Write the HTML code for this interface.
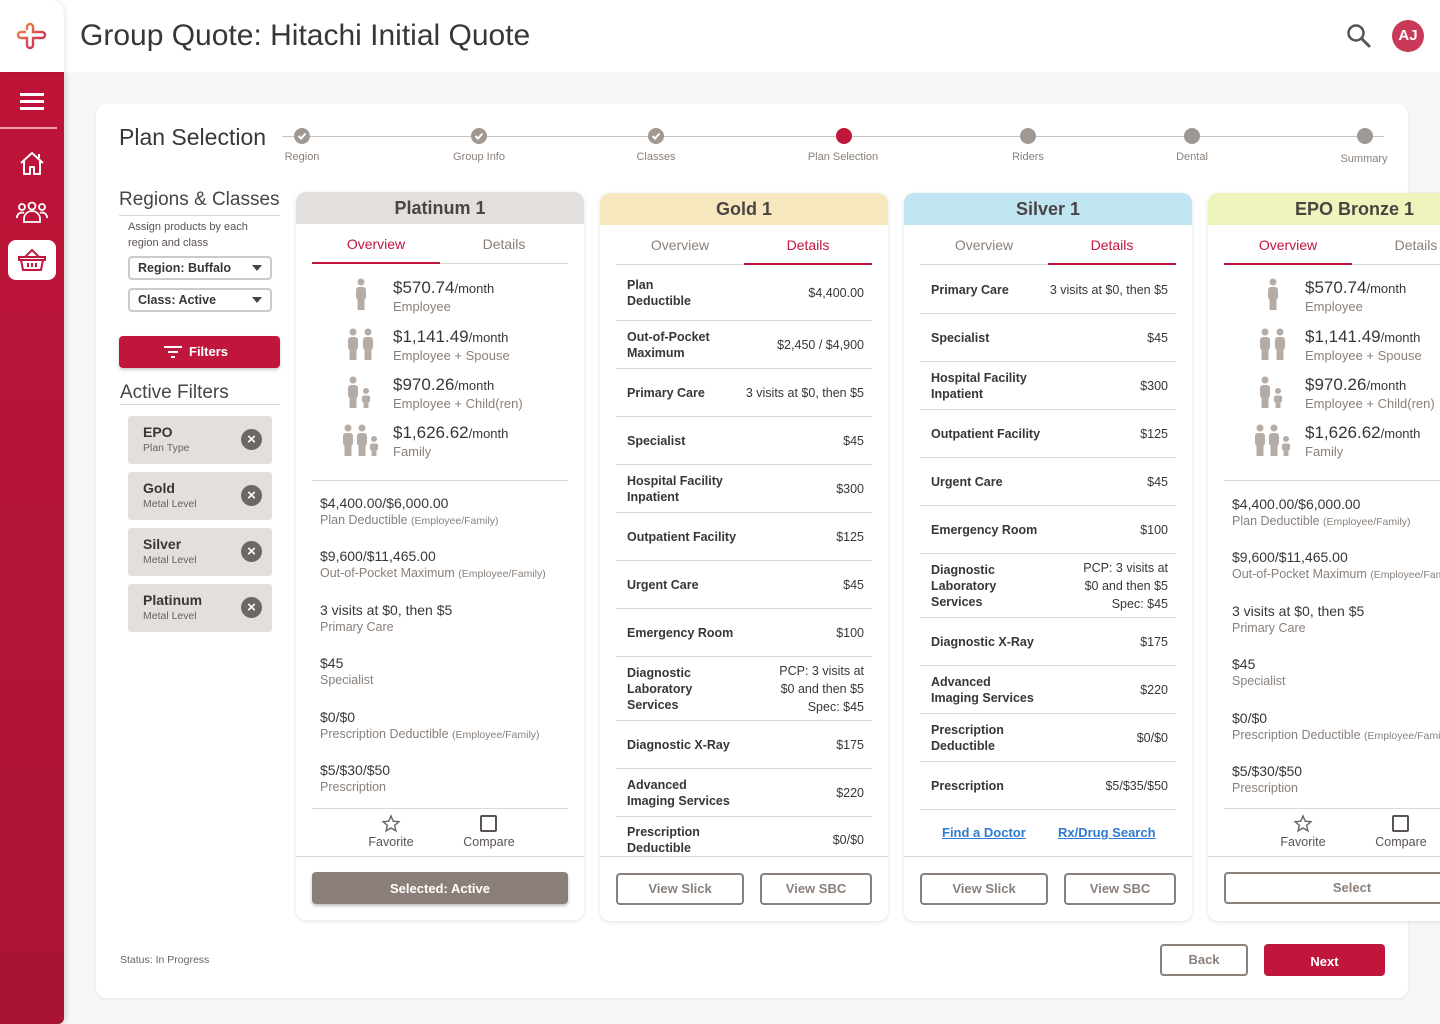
<!DOCTYPE html>
<html><head><meta charset="utf-8"><style>
*{box-sizing:border-box;margin:0;padding:0}
body{width:1440px;height:1024px;overflow:hidden;background:#f7f7f7;font-family:"Liberation Sans",sans-serif;color:#3a3634;position:relative}
.abs{position:absolute}
.side{position:absolute;left:0;top:72px;width:64px;height:952px;background:linear-gradient(#be1438,#a91434);border-bottom-right-radius:6px;box-shadow:2px 0 6px rgba(0,0,0,.15)}
.top{position:absolute;left:0;top:0;width:1440px;height:72px;background:#fff}
.logo{position:absolute;left:0;top:0;width:64px;height:72px;background:#fff;border-top-right-radius:14px;box-shadow:2px 0 6px rgba(0,0,0,.08)}
.panel{position:absolute;left:96px;top:104px;width:1312px;height:894px;background:#fff;border-radius:10px;box-shadow:0 1px 3px rgba(0,0,0,.08)}
.card{position:absolute;top:192px;width:288px;height:728px;background:#fff;border-radius:10px;box-shadow:0 1px 4px rgba(0,0,0,.12);overflow:hidden}
.ch{height:32px;text-align:center;font-size:18px;font-weight:bold;line-height:33px;color:#4a4542;border-radius:10px 10px 0 0}
.tabs{position:absolute;left:16px;top:36px;width:256px;height:36px;border-bottom:1px solid #d9d6d4;display:flex}
.tabs div{flex:1;text-align:center;font-size:14px;line-height:32px;color:#8a807a}
.tabs .on{color:#c0163c;border-bottom:2px solid #c0163c;margin-bottom:-1px}
.rows{position:absolute;left:16px;top:73px;width:256px}
.r{display:flex;align-items:center;justify-content:space-between;border-bottom:1px solid #dcdad8;padding:0 8px 0 11px;font-size:12.5px}
.r b{font-weight:bold;color:#3a3634;line-height:16px}
.r span{text-align:right;line-height:18px;color:#3a3634}
.pr{position:absolute;left:97px;font-size:17px;color:#3a3634}
.pr small{font-size:13px}
.pr i{display:block;font-style:normal;font-size:13px;color:#8a807a;margin-top:1px}
.ic{position:absolute}
.ov{position:absolute;left:24px;font-size:14px;color:#3a3634}
.ov i{display:block;font-style:normal;font-size:12.5px;color:#8a807a;margin-top:2px}
.ov i small{font-size:10.5px}
.foot{position:absolute;left:0;top:664px;width:288px;height:1px;background:#dcdad8}
.btn{position:absolute;height:32px;border:2px solid #8b8079;border-radius:4px;text-align:center;font-size:13px;line-height:28px;color:#8b8079;font-weight:bold;background:#fff}
.fil{position:absolute;left:128px;width:144px;height:48px;background:#e2dfdd;border-radius:3px}
.fil b{position:absolute;left:15px;top:8px;font-size:14px;color:#3a3634}
.fil i{position:absolute;left:15px;top:26px;font-size:10.5px;font-style:normal;color:#6b6460}
.fil .x{position:absolute;right:10px;top:13px;width:21px;height:21px;border-radius:50%;background:#6f6762;color:#fff;text-align:center;line-height:21px;font-size:15px;font-weight:bold}
.st{position:absolute;top:128px;width:16px;height:16px;border-radius:50%;background:#a09893}
.stl{position:absolute;font-size:11px;color:#8a807a;top:151px;transform:translateX(-50%);white-space:nowrap}
.sel{position:absolute;left:128px;width:144px;height:24px;border:2px solid #cfcac7;border-radius:4px;font-size:12.5px;font-weight:bold;color:#3a3634;padding-left:8px;line-height:20px}
.sel:after{content:"";position:absolute;right:8px;top:7px;border:5px solid transparent;border-top:6px solid #4a4542}
.fv{position:absolute;top:814px;text-align:center;font-size:12.5px;color:#5a5350;width:80px}
</style></head><body>
<div class="top"></div>
<div class="abs" style="left:80px;top:19px;font-size:30px;color:#3a3634">Group Quote: Hitachi Initial Quote</div>
<svg class="abs" style="left:1346px;top:23px" width="26" height="26" viewBox="0 0 26 26"><circle cx="10" cy="10" r="7.5" fill="none" stroke="#5a5350" stroke-width="2.5"/><path d="M15.5 15.5L23 23" stroke="#5a5350" stroke-width="3" stroke-linecap="round"/></svg>
<div class="abs" style="left:1392px;top:20px;width:32px;height:32px;border-radius:50%;background:#c93a5a;color:#fff;font-size:15px;font-weight:bold;text-align:center;line-height:32px">AJ</div>
<div class="side">
<div class="abs" style="left:20px;top:21px;width:24px;height:3px;background:#fff;box-shadow:0 7px 0 #fff,0 14px 0 #fff"></div>
<div class="abs" style="left:0;top:55px;width:57px;height:2px;background:rgba(255,255,255,.6)"></div>
<svg class="abs" style="left:18px;top:78px" width="28" height="26" viewBox="0 0 28 26"><path d="M3 13L14 3l11 10M6 11v13h6v-7h4v7h6V11M21 4v4" fill="none" stroke="#fff" stroke-width="2" stroke-linejoin="round"/></svg>
<svg class="abs" style="left:16px;top:128px" width="32" height="24" viewBox="0 0 32 24"><g fill="none" stroke="#fff" stroke-width="1.8"><circle cx="16" cy="6" r="3.5"/><circle cx="6" cy="7" r="3"/><circle cx="26" cy="7" r="3"/><path d="M8 22v-3a8 8 0 0 1 16 0v3zM1 18a5 5 0 0 1 7-5M31 18a5 5 0 0 0-7-5"/></g></svg>
<div class="abs" style="left:8px;top:168px;width:48px;height:40px;background:#fff;border-radius:8px"></div>
<svg class="abs" style="left:17px;top:175px" width="30" height="26" viewBox="0 0 30 26"><g fill="none" stroke="#c0163c" stroke-width="2"><path d="M8 10L15 3l7 7M2 10h26v3H2zM4 13l2 10h18l2-10M11 16v4M15 16v4M19 16v4"/></g></svg>
</div>
<div class="logo"><svg class="abs" style="left:16px;top:22px" width="32" height="28" viewBox="0 0 32 28"><defs><linearGradient id="g" x1="0" x2="1" y1="0" y2="1"><stop offset="0" stop-color="#f6923a"/><stop offset="1" stop-color="#c4166a"/></linearGradient></defs><path d="M11 7V5a3 3 0 0 1 6 0v5h9a3 3 0 0 1 0 6h-9v7a3 3 0 0 1-6 0v-7H5a3 3 0 0 1 0-6h4" fill="none" stroke="url(#g)" stroke-width="2.4" stroke-linecap="round"/></svg></div>

<svg width="0" height="0" style="position:absolute"><defs>
<g id="ad" fill="#b5aca6"><circle cx="6" cy="4" r="3.5"/><rect x="1" y="9" width="10" height="13" rx="3"/><rect x="2.5" y="19" width="7" height="13"/></g>
<g id="kd" fill="#b5aca6"><circle cx="4" cy="15" r="3"/><rect x="0" y="19.5" width="8" height="7" rx="2"/><rect x="1.5" y="25" width="5" height="7"/></g>
</defs></svg>

<div class="panel"></div>
<div class="abs" style="left:119px;top:124px;font-size:23px;color:#3a3634">Plan Selection</div>
<div class="abs" style="left:282px;top:136px;width:1102px;height:1px;background:#c9c3bf"></div>
<div class="st" style="left:294px"></div><div class="st" style="left:471px"></div><div class="st" style="left:648px"></div>
<div class="st" style="left:836px;background:#c0163c"></div><div class="st" style="left:1020px"></div><div class="st" style="left:1184px"></div><div class="st" style="left:1357px"></div>
<svg class="abs" style="left:294px;top:128px" width="400" height="16"><g fill="none" stroke="#fff" stroke-width="2"><path d="M4.5 8l2.5 2.5 4.5-5"/><path d="M181.5 8l2.5 2.5 4.5-5"/><path d="M358.5 8l2.5 2.5 4.5-5"/></g></svg>
<div class="stl" style="left:302px">Region</div><div class="stl" style="left:479px">Group Info</div><div class="stl" style="left:656px">Classes</div><div class="stl" style="left:843px">Plan Selection</div><div class="stl" style="left:1028px">Riders</div><div class="stl" style="left:1192px">Dental</div><div class="stl" style="left:1364px;top:153px">Summary</div>

<div class="abs" style="left:119px;top:189px;font-size:19px;color:#4a4542">Regions &amp; Classes</div>
<div class="abs" style="left:119px;top:215px;width:161px;height:1px;background:#d9d6d4"></div>
<div class="abs" style="left:128px;top:219px;font-size:11px;color:#5a5350;line-height:16px">Assign products by each<br>region and class</div>
<div class="sel" style="top:256px">Region: Buffalo</div>
<div class="sel" style="top:288px">Class: Active</div>
<div class="abs" style="left:119px;top:336px;width:161px;height:32px;background:#c0163c;border-radius:4px;box-shadow:0 2px 3px rgba(0,0,0,.2);color:#fff;font-size:13px;font-weight:bold;line-height:32px;padding-left:70px">Filters</div>
<div class="abs" style="left:164px;top:346px;width:18px;height:2px;background:#fff"></div>
<div class="abs" style="left:168px;top:351px;width:10px;height:2px;background:#fff"></div>
<div class="abs" style="left:171px;top:356px;width:4px;height:2px;background:#fff"></div>
<div class="abs" style="left:120px;top:382px;font-size:19px;color:#4a4542">Active Filters</div>
<div class="abs" style="left:120px;top:404px;width:160px;height:1px;background:#d9d6d4"></div>
<div class="fil" style="top:416px"><b>EPO</b><i>Plan Type</i><div class="x">×</div></div>
<div class="fil" style="top:472px"><b>Gold</b><i>Metal Level</i><div class="x">×</div></div>
<div class="fil" style="top:528px"><b>Silver</b><i>Metal Level</i><div class="x">×</div></div>
<div class="fil" style="top:584px"><b>Platinum</b><i>Metal Level</i><div class="x">×</div></div>
<div class="abs" style="left:120px;top:954px;font-size:10.5px;color:#6b6460">Status: In Progress</div>
<div class="btn" style="left:1160px;top:944px;width:88px;height:32px;line-height:28px">Back</div>
<div class="abs" style="left:1264px;top:944px;width:121px;height:32px;background:#c0163c;border-radius:4px;color:#fff;font-size:13px;font-weight:bold;text-align:center;line-height:36px">Next</div>

<!-- Platinum -->
<div class="card" style="left:296px">
<div class="ch" style="background:#e2dfdd">Platinum 1</div>
<div class="tabs"><div class="on">Overview</div><div>Details</div></div>
<svg class="ic" style="left:42px;top:86px" width="46" height="190" viewBox="0 0 46 190">
<use href="#ad" x="17" y="0"/>
<use href="#ad" x="9" y="50"/><use href="#ad" x="24" y="50"/>
<use href="#ad" x="9" y="98"/><use href="#ad" x="0" y="0" transform="translate(0,0) scale(0)"/><use href="#kd" x="24" y="98"/>
<use href="#ad" x="4" y="146"/><use href="#ad" x="18" y="146"/><use href="#kd" x="32" y="146"/>
</svg>
<div class="pr" style="top:86px">$570.74<small>/month</small><i>Employee</i></div>
<div class="pr" style="top:135px">$1,141.49<small>/month</small><i>Employee + Spouse</i></div>
<div class="pr" style="top:183px">$970.26<small>/month</small><i>Employee + Child(ren)</i></div>
<div class="pr" style="top:231px">$1,626.62<small>/month</small><i>Family</i></div>
<div class="abs" style="left:16px;top:288px;width:256px;height:1px;background:#dcdad8"></div>
<div class="ov" style="top:303px">$4,400.00/$6,000.00<i>Plan Deductible <small>(Employee/Family)</small></i></div>
<div class="ov" style="top:356px">$9,600/$11,465.00<i>Out-of-Pocket Maximum <small>(Employee/Family)</small></i></div>
<div class="ov" style="top:410px">3 visits at $0, then $5<i>Primary Care</i></div>
<div class="ov" style="top:463px">$45<i>Specialist</i></div>
<div class="ov" style="top:517px">$0/$0<i>Prescription Deductible <small>(Employee/Family)</small></i></div>
<div class="ov" style="top:570px">$5/$30/$50<i>Prescription</i></div>
<div class="abs" style="left:16px;top:616px;width:256px;height:1px;background:#dcdad8"></div>
<svg class="abs" style="left:85px;top:622px" width="20" height="20" viewBox="0 0 20 20"><path d="M10 2l2.3 5.2 5.6.5-4.3 3.7 1.3 5.5L10 14l-4.9 2.9 1.3-5.5L2.1 7.7l5.6-.5z" fill="none" stroke="#6b6460" stroke-width="1.4"/></svg>
<div class="abs" style="left:184px;top:623px;width:17px;height:17px;border:2px solid #5a5350;border-radius:2px"></div>
<div class="fv" style="left:55px;top:643px">Favorite</div><div class="fv" style="left:153px;top:643px">Compare</div>
<div class="foot"></div>
<div class="abs" style="left:16px;top:680px;width:256px;height:32px;background:#8b8079;border-radius:4px;box-shadow:0 2px 3px rgba(0,0,0,.25);color:#fff;font-size:13px;font-weight:bold;text-align:center;line-height:34px">Selected: Active</div>
</div>

<!-- Gold -->
<div class="card" style="left:600px;top:193px">
<div class="ch" style="background:#f7e7be">Gold 1</div>
<div class="tabs"><div>Overview</div><div class="on">Details</div></div>
<div class="rows">
<div class="r" style="height:55px"><b>Plan<br>Deductible</b><span>$4,400.00</span></div>
<div class="r" style="height:48px"><b>Out-of-Pocket<br>Maximum</b><span>$2,450 / $4,900</span></div>
<div class="r" style="height:48px"><b>Primary Care</b><span>3 visits at $0, then $5</span></div>
<div class="r" style="height:48px"><b>Specialist</b><span>$45</span></div>
<div class="r" style="height:48px"><b>Hospital Facility<br>Inpatient</b><span>$300</span></div>
<div class="r" style="height:48px"><b>Outpatient Facility</b><span>$125</span></div>
<div class="r" style="height:48px"><b>Urgent Care</b><span>$45</span></div>
<div class="r" style="height:48px"><b>Emergency Room</b><span>$100</span></div>
<div class="r" style="height:64px"><b>Diagnostic<br>Laboratory<br>Services</b><span>PCP: 3 visits at<br>$0 and then $5<br>Spec: $45</span></div>
<div class="r" style="height:48px"><b>Diagnostic X-Ray</b><span>$175</span></div>
<div class="r" style="height:48px"><b>Advanced<br>Imaging Services</b><span>$220</span></div>
<div class="r" style="height:40px;border:none;padding-top:6px"><b>Prescription<br>Deductible</b><span>$0/$0</span></div>
</div>
<div class="foot" style="top:663px"></div>
<div class="btn" style="left:16px;top:680px;width:128px">View Slick</div>
<div class="btn" style="left:160px;top:680px;width:112px">View SBC</div>
</div>

<!-- Silver -->
<div class="card" style="left:904px;top:193px">
<div class="ch" style="background:#bfe5f2">Silver 1</div>
<div class="tabs"><div>Overview</div><div class="on">Details</div></div>
<div class="rows">
<div class="r" style="height:48px"><b>Primary Care</b><span>3 visits at $0, then $5</span></div>
<div class="r" style="height:48px"><b>Specialist</b><span>$45</span></div>
<div class="r" style="height:48px"><b>Hospital Facility<br>Inpatient</b><span>$300</span></div>
<div class="r" style="height:48px"><b>Outpatient Facility</b><span>$125</span></div>
<div class="r" style="height:48px"><b>Urgent Care</b><span>$45</span></div>
<div class="r" style="height:48px"><b>Emergency Room</b><span>$100</span></div>
<div class="r" style="height:64px"><b>Diagnostic<br>Laboratory<br>Services</b><span>PCP: 3 visits at<br>$0 and then $5<br>Spec: $45</span></div>
<div class="r" style="height:48px"><b>Diagnostic X-Ray</b><span>$175</span></div>
<div class="r" style="height:48px"><b>Advanced<br>Imaging Services</b><span>$220</span></div>
<div class="r" style="height:48px"><b>Prescription<br>Deductible</b><span>$0/$0</span></div>
<div class="r" style="height:48px"><b>Prescription</b><span>$5/$35/$50</span></div>
</div>
<div class="abs" style="left:38px;top:632px;font-size:13px;font-weight:bold;color:#2f7bd0;text-decoration:underline">Find a Doctor</div>
<div class="abs" style="left:154px;top:632px;font-size:13px;font-weight:bold;color:#2f7bd0;text-decoration:underline">Rx/Drug Search</div>
<div class="foot" style="top:663px"></div>
<div class="btn" style="left:16px;top:680px;width:128px">View Slick</div>
<div class="btn" style="left:160px;top:680px;width:112px">View SBC</div>
</div>

<!-- Bronze -->
<div class="card" style="left:1208px;top:193px">
<div class="ch" style="background:#eef4bb;text-align:left;padding-left:87px">EPO Bronze 1</div>
<div class="tabs"><div class="on">Overview</div><div>Details</div></div>
<svg class="ic" style="left:42px;top:85px" width="46" height="190" viewBox="0 0 46 190">
<use href="#ad" x="17" y="0"/>
<use href="#ad" x="9" y="50"/><use href="#ad" x="24" y="50"/>
<use href="#ad" x="9" y="98"/><use href="#kd" x="24" y="98"/>
<use href="#ad" x="4" y="146"/><use href="#ad" x="18" y="146"/><use href="#kd" x="32" y="146"/>
</svg>
<div class="pr" style="top:85px">$570.74<small>/month</small><i>Employee</i></div>
<div class="pr" style="top:134px">$1,141.49<small>/month</small><i>Employee + Spouse</i></div>
<div class="pr" style="top:182px">$970.26<small>/month</small><i>Employee + Child(ren)</i></div>
<div class="pr" style="top:230px">$1,626.62<small>/month</small><i>Family</i></div>
<div class="abs" style="left:16px;top:287px;width:256px;height:1px;background:#dcdad8"></div>
<div class="ov" style="top:303px">$4,400.00/$6,000.00<i>Plan Deductible <small>(Employee/Family)</small></i></div>
<div class="ov" style="top:356px">$9,600/$11,465.00<i>Out-of-Pocket Maximum <small>(Employee/Family)</small></i></div>
<div class="ov" style="top:410px">3 visits at $0, then $5<i>Primary Care</i></div>
<div class="ov" style="top:463px">$45<i>Specialist</i></div>
<div class="ov" style="top:517px">$0/$0<i>Prescription Deductible <small>(Employee/Family)</small></i></div>
<div class="ov" style="top:570px">$5/$30/$50<i>Prescription</i></div>
<div class="abs" style="left:16px;top:615px;width:256px;height:1px;background:#dcdad8"></div>
<svg class="abs" style="left:85px;top:621px" width="20" height="20" viewBox="0 0 20 20"><path d="M10 2l2.3 5.2 5.6.5-4.3 3.7 1.3 5.5L10 14l-4.9 2.9 1.3-5.5L2.1 7.7l5.6-.5z" fill="none" stroke="#6b6460" stroke-width="1.4"/></svg>
<div class="abs" style="left:184px;top:622px;width:17px;height:17px;border:2px solid #5a5350;border-radius:2px"></div>
<div class="fv" style="left:55px;top:642px">Favorite</div><div class="fv" style="left:153px;top:642px">Compare</div>
<div class="foot" style="top:663px"></div>
<div class="btn" style="left:16px;top:679px;width:256px">Select</div>
</div>
</body></html>
